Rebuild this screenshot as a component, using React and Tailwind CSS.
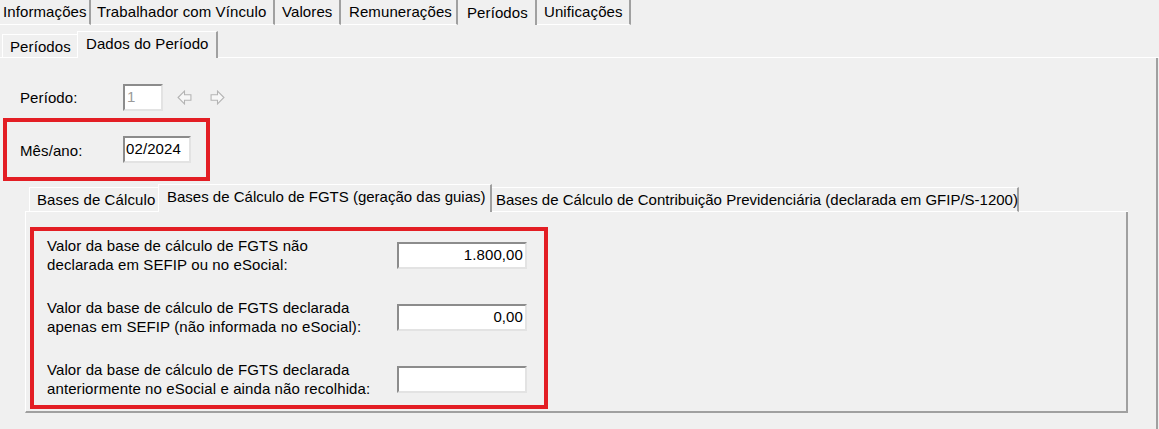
import React from "react";

function Arrow({ dir }) {
  const pts =
    dir === "left"
      ? "1,7 7,1 7,4.5 13,4.5 13,9.5 7,9.5 7,13"
      : "13,7 7,1 7,4.5 1,4.5 1,9.5 7,9.5 7,13";
  return (
    <svg width="15" height="15" viewBox="0 0 14 14" className="block">
      <polygon points={pts} fill="#f7f7f7" stroke="#b4b4b4" strokeWidth="1" strokeLinejoin="miter" />
    </svg>
  );
}

function Field({ value, className = "", disabled }) {
  return (
    <div
      className={`h-[27px] bg-white border-2 border-t-[#8c8c8c] border-l-[#8c8c8c] border-r-[#e3e3e3] border-b-[#e3e3e3] flex items-center ${
        disabled ? "bg-[#f0f0f0] text-[#9a9a9a]" : ""
      } ${className}`}
    >
      {value}
    </div>
  );
}

const topTabs = [
  { label: "Informações", w: "w-[91px]", pl: "pl-[3px]" },
  { label: "Trabalhador com Vínculo", w: "w-[184px]", pl: "pl-[6px]" },
  { label: "Valores", w: "w-[66px]", pl: "pl-[7px]" },
  { label: "Remunerações", w: "w-[117px]", pl: "pl-[8px]" },
];

const rows = [
  ["Valor da base de cálculo de FGTS não", "declarada em SEFIP ou no eSocial:", "1.800,00"],
  ["Valor da base de cálculo de FGTS declarada", "apenas em SEFIP (não informada no eSocial):", "0,00"],
  ["Valor da base de cálculo de FGTS declarada", "anteriormente no eSocial e ainda não recolhida:", ""],
];

export default function App() {
  return (
    <div
      className="w-[1159px] h-[429px] bg-[#f0f0f0] overflow-hidden text-[15px] text-black flex flex-col tracking-[0.1px]"
      style={{ fontFamily: '"Liberation Sans", Arial, sans-serif' }}
    >
      {/* top tabs */}
      <div className="flex h-[25px] shrink-0">
        {topTabs.map((t) => (
          <div
            key={t.label}
            className={`${t.w} ${t.pl} h-[25px] border-b border-white border-r-2 border-r-[#a0a0a0] flex items-center pt-[1px] whitespace-nowrap`}
          >
            {t.label}
          </div>
        ))}
        <div className="w-[79px] h-[25px] border-r-2 border-r-[#a0a0a0] flex items-start pl-[9px] pt-[2px]">
          Períodos
        </div>
        <div className="w-[94px] h-[25px] border-b border-white border-r-2 border-r-[#a0a0a0] flex items-center pl-[7px] pt-[1px]">
          Unificações
        </div>
        <div className="flex-1" />
      </div>

      {/* second tabs */}
      <div className="flex h-[33px] items-end shrink-0">
        <div className="w-[2px] h-[1px] bg-white" />
        <div className="w-[75px] h-[24px] border-t border-l border-b border-white flex items-center pl-[7px] pt-[3px]">
          Períodos
        </div>
        <div className="w-[141px] h-[27px] border-t border-l border-white border-r-2 border-r-[#a0a0a0] flex items-center pl-[8px] pb-[2px]">
          Dados do Período
        </div>
        <div className="flex-1 h-[1px] bg-white" />
      </div>

      {/* panel */}
      <div className="flex-1 mr-[1px] border-r-2 border-r-[#a0a0a0] flex flex-col">
        <div className="flex items-center h-[27px] mt-[26px]">
          <span className="w-[123px] pl-[20px] pt-[1px]">Período:</span>
          <Field value={<span className="pl-[2px]">1</span>} disabled className="w-[40px]" />
          <div className="ml-[14px]">
            <Arrow dir="left" />
          </div>
          <div className="ml-[18px]">
            <Arrow dir="right" />
          </div>
        </div>

        <div className="mt-[7px] ml-[3px] w-[207px] h-[63px] border-4 border-[#e31e24] flex items-center">
          <span className="w-[116px] pl-[13px] pt-[3px]">Mês/ano:</span>
          <Field value={<span className="pl-[1px]">02/2024</span>} className="w-[68px]" />
        </div>

        {/* inner tab control */}
        <div className="mt-[3px] ml-[25px] w-[1103px] flex flex-col">
          <div className="flex h-[28px] items-end">
            <div className="w-[4px] h-[1px] bg-white" />
            <div className="w-[129px] h-[25px] border-t border-l border-b border-white flex items-center pl-[7px] pt-[1px]">
              Bases de Cálculo
            </div>
            <div className="w-[334px] h-[28px] border-t border-l border-white border-r-2 border-r-[#a0a0a0] flex items-center pl-[8px] pb-[2px] whitespace-nowrap tracking-normal">
              Bases de Cálculo de FGTS (geração das guias)
            </div>
            <div className="w-[527px] h-[25px] border-t border-b border-white border-r-2 border-r-[#a0a0a0] flex items-center pl-[4px] pt-[1px] whitespace-nowrap tracking-normal">
              Bases de Cálculo de Contribuição Previdenciária (declarada em GFIP/S-1200)
            </div>
            <div className="flex-1 h-[1px] bg-white" />
          </div>
          <div className="h-[201px] border-l border-white border-r-2 border-r-[#a0a0a0] border-b-2 border-b-[#a0a0a0] pt-[15px]">
            <div className="ml-[4px] w-[518px] h-[182px] border-4 border-[#e31e24] flex flex-col gap-[22px] pt-[4px]">
              {rows.map(([a, b, v], i) => (
                <div key={i} className="flex items-center h-[40px]">
                  <div className="w-[363px] pl-[13px] leading-[19px] whitespace-nowrap">
                    <div>{a}</div>
                    <div>{b}</div>
                  </div>
                  <Field
                    value={<span className="w-full text-right pr-[2px]">{v}</span>}
                    className="w-[130px]"
                  />
                </div>
              ))}
            </div>
          </div>
        </div>
      </div>
    </div>
  );
}
